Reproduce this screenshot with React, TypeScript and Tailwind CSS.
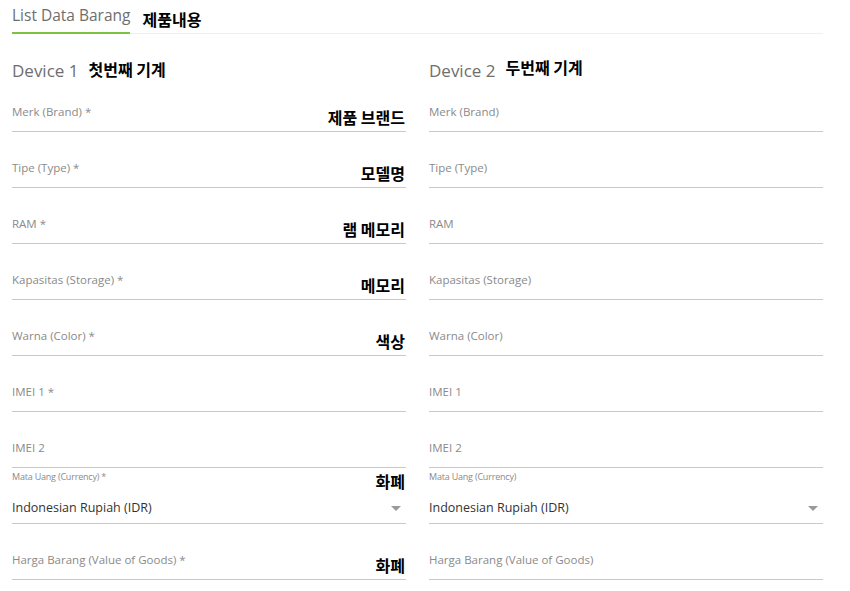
import { ReactNode } from 'react';

const latin = "font-['Open_Sans',sans-serif]";
const hangul = "font-['Noto_Sans_CJK_KR',sans-serif] font-bold text-black";

type FieldDef = { label: string; note?: string };

const device1: FieldDef[] = [
  { label: 'Merk (Brand) *', note: '제품 브랜드' },
  { label: 'Tipe (Type) *', note: '모델명' },
  { label: 'RAM *', note: '램 메모리' },
  { label: 'Kapasitas (Storage) *', note: '메모리' },
  { label: 'Warna (Color) *', note: '색상' },
  { label: 'IMEI 1 *' },
  { label: 'IMEI 2' },
];

const device2: FieldDef[] = [
  { label: 'Merk (Brand)' },
  { label: 'Tipe (Type)' },
  { label: 'RAM' },
  { label: 'Kapasitas (Storage)' },
  { label: 'Warna (Color)' },
  { label: 'IMEI 1' },
  { label: 'IMEI 2' },
];

function TextField({ label, note }: FieldDef) {
  return (
    <div className="h-[56px] first:h-[49px] pt-[28px] first:pt-[21px] border-b border-[#c9c9c9] flex items-start justify-between">
      <span className={`${latin} text-[11.5px] leading-4 text-[#8a8a8a]`}>{label}</span>
      {note && <span className={`${hangul} text-[16px] leading-5 mt-[3px] pr-[1px]`}>{note}</span>}
    </div>
  );
}

function CurrencyField({ required, note }: { required?: boolean; note?: string }) {
  return (
    <div className="h-[56px] border-b border-[#c9c9c9] flex flex-col">
      <div className="h-[24px] flex items-start justify-between pt-[3px]">
        <span className={`${latin} text-[9px] leading-3 text-[#8a8a8a] tracking-[-0.2px]`}>
          Mata Uang (Currency){required ? ' *' : ''}
        </span>
        {note && <span className={`${hangul} text-[16px] leading-5 pr-[1px]`}>{note}</span>}
      </div>
      <div className="flex items-center justify-between mt-[8px]">
        <span className={`${latin} text-[12.5px] leading-4 text-[#333]`}>Indonesian Rupiah (IDR)</span>
        <svg width="10" height="5" viewBox="0 0 10 5" className="mr-[5px]">
          <path d="M0 0 L10 0 L5 5 Z" fill="#9a9a9a" />
        </svg>
      </div>
    </div>
  );
}

function Column({ title, note, fields, required, children }: {
  title: string;
  note: string;
  fields: FieldDef[];
  required?: boolean;
  children?: ReactNode;
}) {
  return (
    <div className="flex flex-col">
      <div className="h-[49px] flex items-end gap-[10px]">
        <span className={`${latin} text-[17px] leading-6 text-[#6e6e6e]`}>{title}</span>
        <span className={`${hangul} text-[16px] leading-5 ${required ? 'mb-[4px]' : 'mb-[6px]'}`}>{note}</span>
      </div>
      <div className="flex flex-col">
        {fields.map((f) => (
          <TextField key={f.label} {...f} />
        ))}
        <CurrencyField required={required} note={required ? '화폐' : undefined} />
        {children}
      </div>
    </div>
  );
}

export default function App() {
  return (
    <div className="w-[850px] h-[591px] bg-white overflow-hidden pl-[12px] pr-[27px]">
      <div className="flex items-end border-b border-[#efefef] h-[34px]">
        <div className="border-b-2 border-[#7cc242] pb-[5px] mb-[-1px]">
          <span className={`${latin} text-[15.5px] leading-5 text-[#6e6e6e]`}>List Data Barang</span>
        </div>
        <span className={`${hangul} text-[16px] leading-5 ml-[12px] mb-[4px]`}>제품내용</span>
      </div>
      <div className="grid grid-cols-2 gap-[23px]">
        <Column title="Device 1" note="첫번째 기계" fields={device1} required>
          <TextField label="Harga Barang (Value of Goods) *" note="화폐" />
        </Column>
        <Column title="Device 2" note="두번째 기계" fields={device2}>
          <TextField label="Harga Barang (Value of Goods)" />
        </Column>
      </div>
    </div>
  );
}
